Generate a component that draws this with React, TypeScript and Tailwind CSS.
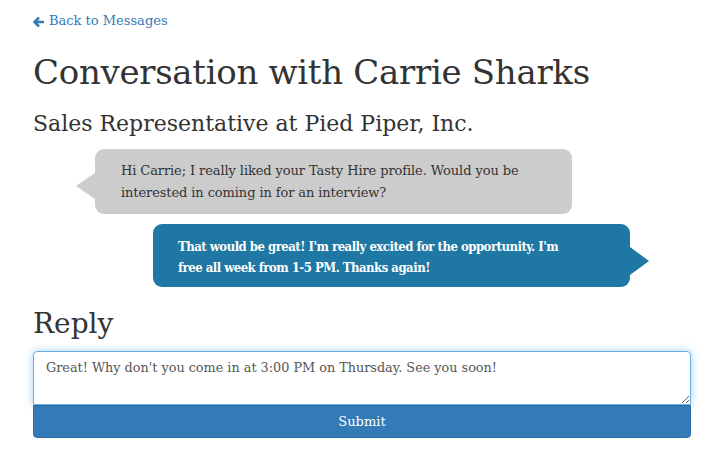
import React from "react";

const font = { fontFamily: '"DejaVu Serif", "Liberation Serif", serif' };
const condensed = { fontFamily: '"DejaVu Serif Condensed", "DejaVu Serif", "Liberation Serif", serif' };

export default function App() {
  return (
    <div className="min-h-[470px] w-[706px] bg-white pl-[33px] pr-[15px] text-[#333]" style={font}>
      <div className="pt-[11px] h-[30px]">
        <a className="flex items-center gap-[4px] text-[13px] leading-[20px] text-[#337ab7]" href="#">
          <svg width="12" height="12" viewBox="0 0 12 12" className="mt-[1px]">
            <path d="M6 1.5 L1.5 6 L6 10.5 M1.8 6 H11" stroke="#337ab7" strokeWidth="2.6" fill="none" strokeLinejoin="miter" />
          </svg>
          <span>Back to Messages</span>
        </a>
      </div>
      <h1 className="mt-[22px] text-[34px] leading-[40px] tracking-[-0.3px]">Conversation with Carrie Sharks</h1>
      <h3 className="mt-[18px] text-[22px] leading-[28px]">Sales Representative at Pied Piper, Inc.</h3>
      <div className="mt-[11px] flex flex-col gap-[10px]">
        <div className="relative ml-[62px] w-[477px] rounded-[9px] bg-[#cccccc] px-[26px] pt-[11px] pb-[10px] text-[13px] leading-[22px] tracking-[-0.1px] text-[#333]">
          <span className="absolute left-[-19px] top-[24px] h-0 w-0 border-y-[13px] border-r-[19px] border-y-transparent border-r-[#cccccc]" />
          Hi Carrie; I really liked your Tasty Hire profile. Would you be interested in coming in for an interview?
        </div>
        <div
          className="relative ml-[120px] w-[477px] rounded-[9px] bg-[#1e78a3] px-[25px] pt-[12px] pb-[9px] text-[13px] font-bold leading-[21px] tracking-[-0.5px] text-white"
          style={condensed}
        >
          <span className="absolute right-[-19px] top-[23px] h-0 w-0 border-y-[14px] border-l-[19px] border-y-transparent border-l-[#1e78a3]" />
          <span className="whitespace-nowrap">That would be great! I'm really excited for the opportunity. I'm</span>
          <br />
          free all week from 1-5 PM. Thanks again!
        </div>
      </div>
      <h2 className="mt-[19px] text-[28px] leading-[36px]">Reply</h2>
      <div className="mt-[9px] flex flex-col">
        <textarea
          className="block h-[54px] w-full resize-y rounded-t-[4px] border border-[#66afe9] pt-[6px] pr-[12px] pb-[6px] pl-[12px] text-[12.8px] leading-[20px] text-[#555] outline-none shadow-[0_0_8px_rgba(102,175,233,0.6)]"
          style={font}
          defaultValue="Great! Why don't you come in at 3:00 PM on Thursday. See you soon!"
        />
        <button
          className="h-[33px] w-full rounded-b-[4px] border border-[#2e6da4] bg-[#337ab7] text-[13px] text-white"
          style={font}
        >
          Submit
        </button>
      </div>
    </div>
  );
}
